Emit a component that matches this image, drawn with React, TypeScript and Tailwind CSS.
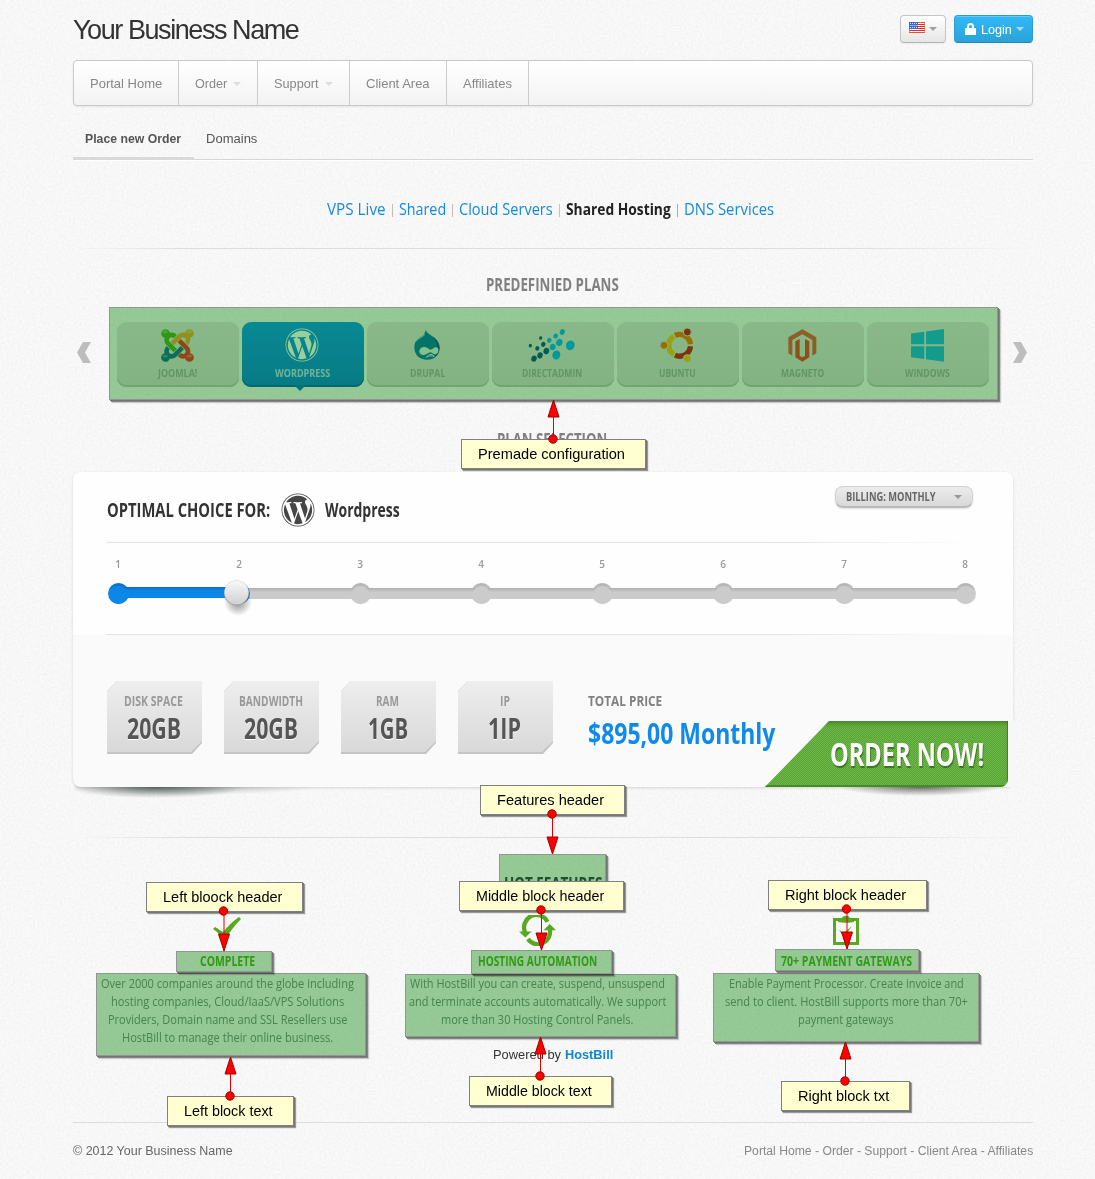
import { useLayoutEffect, useRef, useState, type ReactNode } from "react";
import { FaWordpress } from "react-icons/fa";

/** One line of text, condensed or widened to a fixed width. */
function Fit({ w, className = "", children }: { w: number; className?: string; children: ReactNode }) {
  const ref = useRef<HTMLSpanElement>(null);
  const [scale, setScale] = useState(1);
  useLayoutEffect(() => {
    if (ref.current) setScale(w / ref.current.offsetWidth);
  }, [w]);
  return (
    <span className={`block shrink-0 ${className}`} style={{ width: w }}>
      <span
        ref={ref}
        className="inline-block origin-left whitespace-nowrap align-top"
        style={{ transform: `scaleX(${scale})` }}
      >
        {children}
      </span>
    </span>
  );
}

function Noise() {
  return (
    <svg className="pointer-events-none absolute inset-0 h-full w-full" aria-hidden="true">
      <filter id="paper" x="0" y="0" width="100%" height="100%" colorInterpolationFilters="sRGB">
        <feTurbulence type="fractalNoise" baseFrequency="0.45" numOctaves="2" seed="4" />
        <feColorMatrix values="0.07 0 0 0 0.934  0.05 0.02 0 0 0.934  0.05 0 0.02 0 0.934  0 0 0 0 1" />
      </filter>
      <rect width="100%" height="100%" filter="url(#paper)" />
    </svg>
  );
}

function Caret({ className }: { className: string }) {
  return (
    <svg viewBox="0 0 8 4" className={`h-[4px] w-[8px] shrink-0 fill-current ${className}`}>
      <path d="M0 0h8L4 4z" />
    </svg>
  );
}

function Flag() {
  return (
    <svg viewBox="0 0 16 11" className="h-[11px] w-[16px]">
      <rect width="16" height="11" fill="#fff" />
      {[0, 2, 4, 6, 8, 10].map((y) => (
        <rect key={y} y={y} width="16" height="1" fill={y === 0 || y === 10 ? "#e0553e" : "#f5232b"} />
      ))}
      <rect width="9" height="7" fill="#3f66d8" />
      {[1, 3, 5].map((y) =>
        [1, 3, 5, 7].map((x) => <rect key={`${x}${y}`} x={x + (y === 3 ? 0.5 : 0)} y={y} width="1" height="1" fill="#dbe6ff" />),
      )}
      <path d="M.5 7v3.500M15.500.500v10" fill="none" stroke="#d8604a" strokeOpacity=".6" />
    </svg>
  );
}

function JoomlaIcon() {
  return (
    <svg viewBox="0 30 448 452" className="h-[33px] w-[33px]">
      <path fill="#15888f" d="M312.1 307.6l-44-44.3c-87 86.4-50.4 50.4-99.7 99.8-14.3 14.3-37.6 14.3-51.9 0-13.1-13.4-16.9-35.3 3.2-55.4l-44-44.3c-30.2 30.2-38 65.2-29.5 98.3-26.7 6-46.2 29.9-46.2 58.2C0 453.2 26.8 480 59.8 480c28.6 0 52.5-19.8 58.6-46.7 32.7 8.2 68.5-.6 94.2-26 32.1-32 12.2-12.4 99.5-99.7z" />
      <path fill="#f2b132" d="M130.1 208.5l44.3 44.3c10-10 89.7-89.7 99.7-99.8 14.3-14.3 37.6-14.3 51.9 0 12.8 12.8 17 35-3.5 55.4l44 44.3c31.2-31.2 38.5-67.6 28.9-101.2 29.2-4.1 51.9-29.2 51.9-59.5 0-33.2-26.8-60.1-59.8-60.1-30.3 0-55.4 22.5-59.5 51.6-33.8-9.9-71.7-1.5-98.3 25.1-18.3 19.1-71.1 71.5-99.6 99.9z" />
      <path fill="#4cbb22" d="M.6 92.1C.6 58.8 27.4 32 60.4 32c30 0 54.5 21.9 59.2 50.2 32.6-7.6 67.1.6 96.5 30l-44.3 44.3c-20.5-20.5-42.6-16.3-55.4-3.5-14.3 14.3-14.3 37.9 0 52.2l99.5 99.5-44 44.3c-87.7-87.2-49.7-49.7-99.8-99.7-26.8-26.5-35-64.8-24.8-98.9C20.4 144.6.6 120.7.6 92.1z" />
      <path fill="#ee5822" d="M396.4 360.7c8.2-32.7-.9-68.5-26.3-93.9-11.8-12.2 5 4.7-99.5-99.7l-44.3 44.3 99.7 99.7c14.3 14.3 14.3 37.6 0 51.9-12.8 12.8-35 17-55.4-3.5l-44 44.3c27.6 30.2 68 38.8 102.7 28 5.5 27.4 29.7 48.1 58.9 48.1 33 0 59.8-26.8 59.8-60.1 0-30.2-22.5-55-51.6-59.1z" />
      <g fill="#fff" fillOpacity=".25">
        <ellipse cx="56" cy="68" rx="38" ry="22" />
        <ellipse cx="388" cy="68" rx="38" ry="22" />
        <ellipse cx="56" cy="402" rx="38" ry="20" />
        <ellipse cx="388" cy="402" rx="38" ry="20" />
      </g>
    </svg>
  );
}

function DrupalIcon() {
  return (
    <svg viewBox="0 0 76 90" className="h-[30px] w-[26px]">
      <path fill="#068dae" d="M34 0c3 9 12 13 22 20 12 8 20 19 20 33 0 22-16 36-38 36S0 74 0 53c0-17 9-27 20-34C28 14 33 9 34 0z" />
      <path fill="#04647c" d="M56 20c12 8 20 19 20 33 0 12-6 22-14 28 6-14 12-38-6-61z" opacity=".6" />
      <path fill="#dcf0f4" d="M28 8C22 14 7 22 3 37c8-8 22-14 28-21 2-3-1-6-3-8z" opacity=".6" />
      <path fill="#dcebe9" d="M29 51c10 0 15 8 20 8s9-7 16-7c6 0 8 6 7 12-1 7-7 10-12 9-4-1-8-6-12-6-5 0-11 8-21 8-8 0-13-5-12-12 1-8 7-12 14-12z" />
      <path d="M36 82c3-5 8-9 14-9 4 0 8 3 9 7-5-4-13-4-23 2z" fill="none" stroke="#dcebe9" strokeWidth="3" />
    </svg>
  );
}

function DirectAdminIcon() {
  const dots: [number, number, number, string][] = [
    [515, 253, 5, "#007089"], [546, 230, 5, "#007089"], [554, 249, 7, "#007089"], [536, 261, 6.5, "#007089"],
    [563, 269, 9, "#007089"], [544, 282, 8.5, "#007089"], [526, 292, 8.5, "#007089"],
    [572, 237, 7, "#00bfff"], [591, 224, 7, "#00bfff"], [611, 212, 8, "#00bfff"], [602, 243, 10, "#00bfff"],
    [582, 257, 9, "#00bfff"], [635, 252, 13.5, "#00bfff"], [593, 281, 12.5, "#00bfff"],
  ];
  return (
    <svg viewBox="505 200 150 105" className="h-[35px] w-[50px]">
      {dots.map(([x, y, r, c]) => (
        <ellipse key={`${x}`} cx={x} cy={y} rx={r * 0.95} ry={r * 1.08} fill={c} transform={`rotate(20 ${x} ${y})`} />
      ))}
    </svg>
  );
}

function UbuntuIcon() {
  return (
    <svg viewBox="0 108 108 108" className="h-[36px] w-[36px]">
      <g fill="none" strokeWidth="16">
        <path d="M44.5 135.5A32.5 32.5 0 0 0 44.5 190.5" stroke="#ffc619" />
        <path d="M48 133.5A32.5 32.5 0 0 1 94.4 160" stroke="#ff8800" />
        <path d="M94.4 166A32.5 32.5 0 0 1 48 192.500" stroke="#d03e19" />
      </g>
      <g stroke="#dfe2df" strokeWidth="3">
        <circle cx="15" cy="163" r="12" fill="#ff8800" />
        <circle cx="85" cy="123" r="12" fill="#d03e19" />
        <circle cx="85" cy="203" r="12" fill="#ffc619" />
      </g>
    </svg>
  );
}

function MagentoIcon() {
  return (
    <svg viewBox="386 115 87 99" className="h-[33px] w-[29px]">
      <path d="M387 140 429 116 471 140V188L459 195V148L429 131 399 148V195L387 188z" fill="#ee7340" />
      <path d="M408 152 421 145V196L429 200 437 196V145L450 152V200L429 213 408 200z" fill="#ee6226" />
    </svg>
  );
}

function WindowsIcon() {
  return (
    <svg viewBox="0 0 97 97" className="h-[33px] w-[33px] fill-[#1fc0ec]">
      <path d="M0 13 39 8v37H0zM44 7 97 0v45H44zM0 51h39v37L0 83zM44 51h53v45l-53-7z" />
    </svg>
  );
}

const plans: { name: string; w: number; icon: ReactNode }[] = [
  { name: "JOOMLA!", w: 39, icon: <JoomlaIcon /> },
  { name: "WORDPRESS", w: 55, icon: <FaWordpress className="h-[34px] w-[34px] text-white" /> },
  { name: "DRUPAL", w: 35, icon: <DrupalIcon /> },
  { name: "DIRECTADMIN", w: 60, icon: <DirectAdminIcon /> },
  { name: "UBUNTU", w: 37, icon: <UbuntuIcon /> },
  { name: "MAGNETO", w: 43, icon: <MagentoIcon /> },
  { name: "WINDOWS", w: 45, icon: <WindowsIcon /> },
];

function PlanTile({ name, w, icon, active }: { name: string; w: number; icon: ReactNode; active: boolean }) {
  return (
    <div
      className={
        "relative flex h-[65px] w-[122px] flex-col items-center rounded-[9px] pr-[2px] " +
        (active
          ? "bg-linear-to-b from-[#0da9f6] to-[#0b97dc] text-[#b7deff] shadow-[inset_0_-2px_0_#087fc2]"
          : "bg-linear-to-b from-[#e4e4e4] to-[#dadcda] text-[#a3b8a5] shadow-[inset_0_-2px_0_#c3c8c3]")
      }
    >
      <div className="flex h-[46px] items-center justify-center">{icon}</div>
      <Fit w={w} className="text-[11px] leading-[10px] font-bold">{name}</Fit>
      {active && (
        <svg viewBox="0 0 12 6" className="absolute top-[63px] left-[52px] h-[6px] w-[12px] fill-[#0a8bcd]">
          <path d="M0 0h12L6 6z" />
        </svg>
      )}
    </div>
  );
}

function Chevron({ flip = false }: { flip?: boolean }) {
  return (
    <svg viewBox="0 0 14 21" className={`-mt-[4px] h-[21px] w-[14px] fill-[#bdbdbd] ${flip ? "-scale-x-100" : ""}`}>
      <path d="M6 0h8L8 10.500 14 21H6L0 10.500z" />
    </svg>
  );
}

const steps = [1, 2, 3, 4, 5, 6, 7, 8];

function Slider() {
  return (
    <div className="relative mt-[13px] ml-[34px] w-[870px]">
      <div className="flex gap-[101px] pl-[1px]">
        {steps.map((n) => (
          <span key={n} className="w-[20px] text-center text-[10px] leading-[16px] font-semibold text-[#999]">{n}</span>
        ))}
      </div>
      <svg viewBox="0 0 870 40" className="mt-[6px] block h-[40px] w-[870px]">
        <defs>
          <linearGradient id="track" x1="0" y1="0" x2="0" y2="1">
            <stop offset="0" stopColor="#b0b0b0" />
            <stop offset=".4" stopColor="#cbcbcb" />
          </linearGradient>
          <linearGradient id="fill" x1="0" y1="0" x2="0" y2="1">
            <stop offset="0" stopColor="#0b6fc4" />
            <stop offset=".35" stopColor="#0b87e8" />
          </linearGradient>
          <linearGradient id="knob" x1="0" y1="0" x2="0" y2="1">
            <stop offset="0" stopColor="#f9f9f9" />
            <stop offset="1" stopColor="#d0d0d0" />
          </linearGradient>
          <radialGradient id="knobShadow">
            <stop offset="0" stopColor="#000" stopOpacity=".45" />
            <stop offset="1" stopColor="#000" stopOpacity="0" />
          </radialGradient>
        </defs>
        {steps.slice(2).map((n) => (
          <circle key={n} cx={11.5 + (n - 1) * 121} cy="15.5" r="10.5" fill="url(#track)" />
        ))}
        <rect x="130" y="10" width="728" height="11" fill="url(#track)" />
        {steps.slice(2).map((n) => (
          <circle key={n} cx={11.5 + (n - 1) * 121} cy="17" r="9" fill="#cbcbcb" />
        ))}
        <circle cx="11.5" cy="15.5" r="10.5" fill="url(#fill)" />
        <circle cx="132.5" cy="15.5" r="10.5" fill="#0b79d2" />
        <rect x="12" y="9" width="120" height="11" fill="url(#fill)" />
        <circle cx="11.5" cy="17" r="9" fill="#0b87e8" />
        <ellipse cx="131" cy="24" rx="14" ry="14" fill="url(#knobShadow)" />
        <circle cx="129.5" cy="15" r="12.5" fill="#9f9f9f" />
        <circle cx="129.5" cy="14.5" r="12" fill="url(#knob)" />
      </svg>
    </div>
  );
}

const stats = [
  { label: "DISK SPACE", lw: 59, value: "20GB", vw: 54 },
  { label: "BANDWIDTH", lw: 64, value: "20GB", vw: 54 },
  { label: "RAM", lw: 23, value: "1GB", vw: 40 },
  { label: "IP", lw: 10, value: "1IP", vw: 33 },
];

function StatBox({ label, lw, value, vw }: (typeof stats)[number]) {
  return (
    <div className="h-[73px] w-[95px] bg-[#c4c4c4] [clip-path:polygon(10px_0,100%_0,100%_62px,85px_100%,0_100%,0_10px)]">
      <div className="flex h-[73px] flex-col items-center bg-linear-to-b from-[#eee] to-[#d8d8d8] pt-[11px] pr-[2px] [clip-path:polygon(10px_0,100%_0,100%_60px,84px_71px,0_71px,0_10px)]">
        <Fit w={lw} className="text-[13.5px] leading-[18px] font-bold text-[#999]">{label}</Fit>
        <Fit w={vw} className="text-[28px] leading-[36px] font-bold text-[#555] [text-shadow:0_1px_0_#fff]">{value}</Fit>
      </div>
    </div>
  );
}

const features = [
  {
    title: "COMPLETE",
    w: 55,
    lines: [
      ["Over 2000 companies around the globe including", 253],
      ["hosting companies, Cloud/IaaS/VPS Solutions", 233],
      ["Providers, Domain name and SSL Resellers use", 239],
      ["HostBill to manage their online business.", 211],
    ] as [string, number][],
    icon: (
      <svg viewBox="0 0 30 24" className="mt-[-4px] h-[24px] w-[30px]">
        <path d="M1 12 3 10c3 2 5 3 8 5C16 9 21 4 27 0l2 2C22 9 17 16 12 24 9 19 6 15 1 12z" fill="#59a81d" />
      </svg>
    ),
  },
  {
    title: "HOSTING AUTOMATION",
    w: 119,
    lines: [
      ["With HostBill you can create, suspend, unsuspend", 255],
      ["and terminate accounts automatically. We support", 257],
      ["more than 30 Hosting Control Panels.", 192],
    ] as [string, number][],
    icon: (
      <svg viewBox="388 405 112 92" className="h-[31px] w-[37px]">
        <g fill="none" stroke="#59a81d" strokeWidth="13">
          <path d="M474 425A37 38 0 0 0 407 458" />
          <path d="M415 477A37 38 0 0 0 481 446" />
        </g>
        <path d="M388 454h38l-19 18zM462 450h38l-19-19z" fill="#59a81d" />
      </svg>
    ),
  },
  {
    title: "70+ PAYMENT GATEWAYS",
    w: 131,
    lines: [
      ["Enable Payment Processor. Create invoice and", 235],
      ["send to client. HostBill supports more than 70+", 243],
      ["payment gateways", 96],
    ] as [string, number][],
    icon: (
      <svg viewBox="0 0 26 30" className="mt-[-2px] h-[30px] w-[26px]">
        <path d="M1.500 4.500h23v24h-23z" fill="none" stroke="#59a81d" strokeWidth="3" />
        <path d="M5 3h4C10 0 16 0 17 3h4v4c-4 1-12 1-16 0z" fill="#59a81d" />
        <path d="m6 15 5 3 8-7-8 11z" fill="#59a81d" />
      </svg>
    ),
  },
];

/* Annotation layer */

const highlights = [
  "left-[109px] top-[307px] w-[889px] h-[93px]",
  "left-[499px] top-[854px] w-[107px] h-[40px]",
  "left-[96px] top-[973px] w-[270px] h-[83px]",
  "left-[405px] top-[974px] w-[271px] h-[63px]",
  "left-[713px] top-[973px] w-[266px] h-[69px]",
  "left-[176px] top-[951px] w-[96px] h-[21px]",
  "left-[471px] top-[950px] w-[141px] h-[24px]",
  "left-[775px] top-[949px] w-[144px] h-[22px]",
];

const callouts = [
  { text: "Premade configuration", tw: 147, pos: "left-[461px] top-[439px] w-[185px]" },
  { text: "Features header", tw: 107, pos: "left-[480px] top-[785px] w-[145px]" },
  { text: "Left bloock header", tw: 119, pos: "left-[146px] top-[882px] w-[157px]" },
  { text: "Middle block header", tw: 128, pos: "left-[459px] top-[881px] w-[165px]" },
  { text: "Right block header", tw: 121, pos: "left-[768px] top-[880px] w-[159px]" },
  { text: "Left block text", tw: 89, pos: "left-[167px] top-[1096px] w-[127px]" },
  { text: "Middle block text", tw: 106, pos: "left-[469px] top-[1076px] w-[143px]" },
  { text: "Right block txt", tw: 91, pos: "left-[781px] top-[1081px] w-[129px]" },
];

const arrows: [number, number, number][] = [
  [553.5, 439, 400],
  [552.5, 814, 854],
  [224, 911, 951],
  [541.5, 910, 950],
  [847, 909, 949],
  [230.5, 1096, 1057],
  [540.5, 1076, 1037],
  [845.5, 1081, 1042],
];

function Annotations() {
  return (
    <>
      {highlights.map((h) => (
        <div key={h} className={`absolute border border-[#999] bg-[#99cf99] mix-blend-multiply shadow-[1px_1px_0_#777,2px_2px_0_#888,3px_3px_1px_#d0d0d0] ${h}`} />
      ))}
      {callouts.map((c) => (
        <div
          key={c.text}
          className={`absolute h-[30px] border border-[#808080] bg-[#ffffd2] pl-[16px] font-['Liberation_Sans',sans-serif] text-[15px] leading-[27px] text-black shadow-[1px_1px_0_#777,2px_2px_1px_#999] ${c.pos}`}
        >
          <Fit w={c.tw}>{c.text}</Fit>
        </div>
      ))}
      <svg viewBox="0 0 1095 1179" className="pointer-events-none absolute inset-0 h-[1179px] w-[1095px]">
        {arrows.map(([x, y, tip]) => {
          const base = tip > y ? tip - 17 : tip + 17;
          return (
            <g key={`${x}-${y}`} fill="#f00" stroke="#a00000" strokeWidth="1">
              <path d={`M${x} ${y}V${base}`} stroke="#e80000" />
              <path d={`M${x - 5.5} ${base}h11L${x} ${tip}z`} />
              <circle cx={x - 0.5} cy={y} r="4.2" />
            </g>
          );
        })}
      </svg>
    </>
  );
}

const divider = "h-px bg-[linear-gradient(to_right,transparent,#ddd_12%,#ddd_80%,transparent)]";
const navCell = "flex items-center border-r border-[#ccc] pt-px";

export default function App() {
  return (
    <div className="relative isolate h-[1179px] w-[1095px] overflow-hidden bg-[#f7f7f7] font-['Liberation_Sans',Arial,sans-serif]">
      <Noise />
      <div className="relative ml-[73px] w-[960px]">
        <header className="flex h-[60px] justify-between">
          <Fit w={225} className="text-[28px] leading-[60px] tracking-[-1.5px] text-[#333]">Your Business Name</Fit>
          <div className="flex gap-[8px] pt-[15px]">
            <button className="flex h-[28px] w-[46px] items-center gap-[4px] rounded-[4px] border border-[#c5c5c5] border-b-[#b3b3b3] bg-linear-to-b from-white to-[#e6e6e6] pb-[3px] pl-[8px] shadow-[0_1px_2px_rgba(0,0,0,0.05)]">
              <Flag />
              <Caret className="mt-[3px] text-[#a0a0a0]" />
            </button>
            <button className="flex h-[28px] w-[79px] items-center rounded-[4px] border border-[#2a9fd4] border-b-[#2388b5] bg-linear-to-b from-[#31b9f8] to-[#2aa2d8] pl-[10px] text-white shadow-[inset_0_1px_0_rgba(255,255,255,0.25)]">
              <svg viewBox="0 0 11 12" className="h-[12px] w-[11px] fill-white">
                <path d="M0 5h2V3.500C2 1.200 3.300 0 5.500 0S9 1.200 9 3.500V5h2v7H0zM4 5h3V3.500C7 2.500 6.500 2 5.500 2S4 2.500 4 3.500z" />
              </svg>
              <Fit w={31} className="ml-[5px] pt-px text-left text-[13px] leading-[26px]">Login</Fit>
              <Caret className="ml-[4px] text-[#a9dff7]" />
            </button>
          </div>
        </header>

        <nav className="flex h-[46px] rounded-[4px] border border-[#c9c9c9] bg-linear-to-b from-white to-[#f3f3f3] text-[13px] leading-[20px] text-[#888] shadow-[0_1px_2px_rgba(0,0,0,0.08)]">
          <div className={`${navCell} w-[105px] pl-[16px]`}><Fit w={72}>Portal Home</Fit></div>
          <div className={`${navCell} w-[79px] gap-[6px] pl-[16px]`}><Fit w={32}>Order</Fit><Caret className="text-[#ddd]" /></div>
          <div className={`${navCell} w-[92px] gap-[6px] pl-[16px]`}><Fit w={45}>Support</Fit><Caret className="text-[#ddd]" /></div>
          <div className={`${navCell} w-[97px] pl-[16px]`}><Fit w={64}>Client Area</Fit></div>
          <div className={`${navCell} w-[82px] pl-[16px]`}><Fit w={49}>Affiliates</Fit></div>
        </nav>

        <div className="flex h-[54px] items-end border-b border-[#d6d6d6] text-[12px] leading-[36px] text-[#555] shadow-[0_1px_0_#fff]">
          <div className="-mb-px w-[121px] border-b-[3px] border-[#d9d9d9] pl-[12px]">
            <Fit w={96} className="font-bold">Place new Order</Fit>
          </div>
          <div className="pb-[2px] pl-[12px]"><Fit w={51}>Domains</Fit></div>
        </div>

        <div className="font-['Open_Sans','Noto_Sans',sans-serif]">
          <div className="flex justify-start pt-[39px] pb-[29px] pl-[254px] text-[15.5px] leading-[20px] text-[#1489e2]">
            <Fit w={59}>VPS Live</Fit>
            <span className="w-[13px] text-center text-[13px] text-[#c4b5a8]">|</span>
            <Fit w={47}>Shared</Fit>
            <span className="w-[13px] text-center text-[13px] text-[#c4b5a8]">|</span>
            <Fit w={94}>Cloud Servers</Fit>
            <span className="w-[13px] text-center text-[13px] text-[#9cc6ea]">|</span>
            <Fit w={105} className="font-bold text-[#222]">Shared Hosting</Fit>
            <span className="w-[13px] text-center text-[13px] text-[#a9a098]">|</span>
            <Fit w={90}>DNS Services</Fit>
          </div>
          <div className={divider} />

          <h2 className="mt-[26px] flex h-[20px] justify-center pr-[2px]">
            <Fit w={133} className="text-[18px] leading-[19px] font-bold text-[#808080]">PREDEFINIED PLANS</Fit>
          </h2>

          <div className="mt-[27px] flex h-[65px] items-center pl-[4px]">
            <Chevron />
            <div className="mr-[24px] ml-[26px] flex gap-[3px]">
              {plans.map((p) => (
                <PlanTile key={p.name} {...p} active={p.name === "WORDPRESS"} />
              ))}
            </div>
            <Chevron flip />
          </div>

          <h2 className="mt-[42px] flex h-[20px] justify-center pr-[2px]">
            <Fit w={110} className="text-[18px] leading-[20px] font-bold text-[#808080]">PLAN SELECTION</Fit>
          </h2>

          <section className="relative mt-[23px] h-[315px] w-[940px]">
            <div className="absolute bottom-[-11px] left-[2px] h-[22px] w-[240px] bg-[radial-gradient(90px_11px_at_80px_50%,rgba(60,70,65,0.75),transparent),radial-gradient(120px_8px_at_120px_50%,rgba(60,70,65,0.3),transparent)]" />
            <div className="absolute right-[8px] bottom-[-9px] h-[18px] w-[200px] bg-[radial-gradient(80px_9px_at_115px_50%,rgba(60,60,60,0.7),transparent)]" />
            <div className="relative h-[315px] rounded-[8px] bg-[#fafafa] shadow-[0_1px_3px_rgba(0,0,0,0.14)]">
              <div className="h-[163px] rounded-t-[8px] bg-[#fefefe]">
                <div className="flex h-[70px] items-center pl-[34px] text-[#333]">
                  <Fit w={163} className="pt-[6px] text-[20px] leading-[24px] font-bold">OPTIMAL CHOICE FOR:</Fit>
                  <FaWordpress className="mt-[5px] ml-[11px] h-[34px] w-[34px] shrink-0 text-[#464646]" />
                  <Fit w={75} className="ml-[10px] pt-[6px] text-[19px] leading-[24px] font-bold">Wordpress</Fit>
                  <div className="-mt-[20px] ml-[435px] flex h-[22px] w-[138px] shrink-0 items-center rounded-[8px] border border-[#d2d2d2] border-b-2 border-b-[#bbb] bg-linear-to-b from-[#ececec] to-[#d9d9d9] pl-[10px] shadow-[0_1px_2px_rgba(0,0,0,0.12)]">
                    <Fit w={90} className="text-[12px] leading-[19px] font-bold text-[#666]">BILLING: MONTHLY</Fit>
                    <Caret className="ml-[18px] text-[#999]" />
                  </div>
                </div>
                <div className="ml-[33px] h-px w-[875px] bg-linear-to-r from-[#e2e2e2] from-75% to-transparent" />
                <Slider />
              </div>
              <div className="-mt-px ml-[33px] h-px w-[875px] bg-linear-to-r from-[#e2e2e2] from-75% to-transparent" />
              <div className="flex pt-[46px] pl-[34px]">
                <div className="flex gap-[22px]">
                  {stats.map((s, i) => (
                    <StatBox key={i} {...s} />
                  ))}
                </div>
                <div className="ml-[35px] pt-[10px]">
                  <Fit w={74} className="text-[15px] leading-[18px] font-bold text-[#808080]">TOTAL PRICE</Fit>
                  <Fit w={187} className="text-[28px] leading-[48px] font-bold text-[#0f8aea]">$895,00 Monthly</Fit>
                </div>
              </div>
              <div className="absolute right-[-3px] bottom-0 h-[66px] w-[15px] bg-[#f7f7f7]" />
              <div className="absolute right-[5px] bottom-0 h-[66px] w-[243px] overflow-hidden rounded-br-[8px]">
                <button className="block h-[66px] w-[243px] bg-[#6fba46] bg-[repeating-conic-gradient(rgba(30,100,15,0.28)_0_25%,transparent_0_50%)] bg-size-[2px_2px] pl-[65px] text-left text-white shadow-[inset_0_4px_5px_-2px_rgba(30,80,10,0.5),inset_-1px_-2px_0_#478a26] [clip-path:polygon(64px_0,100%_0,100%_100%,0_100%)]">
                  <Fit w={154} className="text-[32px] leading-[66px] font-bold [text-shadow:1px_2px_1px_#3c7321]">ORDER NOW!</Fit>
                </button>
              </div>
            </div>
          </section>

          <div className={`mt-[50px] ${divider}`} />
          <h2 className="mt-[35px] flex h-[20px] justify-center">
            <Fit w={98} className="text-[18px] leading-[20px] font-bold text-[#326343]">HOT FEATURES</Fit>
          </h2>

          <div className="mt-[22px] grid h-[132px] w-[928px] grid-cols-[310px_310px_308px]">
            {features.map((f) => (
              <div key={f.title} className="flex flex-col items-center pr-[2px]">
                <div className="flex h-[31px] items-center">{f.icon}</div>
                <Fit w={f.w} className="h-[29px] text-[13.5px] leading-[31px] font-bold text-[#53bc21]">{f.title}</Fit>
                {f.lines.map(([t, w]) => (
                  <Fit key={t} w={w} className="text-[12px] leading-[18px] text-[#77a085]">{t}</Fit>
                ))}
              </div>
            ))}
          </div>
        </div>

        <p className="flex h-[17px] gap-[4px] pl-[420px] text-[12.5px] leading-[17px] text-[#333]">
          <Fit w={68}>Powered by</Fit>
          <Fit w={48} className="font-bold text-[#0f87d0]">HostBill</Fit>
        </p>

        <footer className="mt-[58px] flex justify-between border-t border-[#dcdcdc] text-[12px] leading-[56px]">
          <Fit w={160} className="text-[#666]">© 2012 Your Business Name</Fit>
          <Fit w={289} className="text-[#888]">Portal Home - Order - Support - Client Area - Affiliates</Fit>
        </footer>
      </div>
      <Annotations />
    </div>
  );
}
